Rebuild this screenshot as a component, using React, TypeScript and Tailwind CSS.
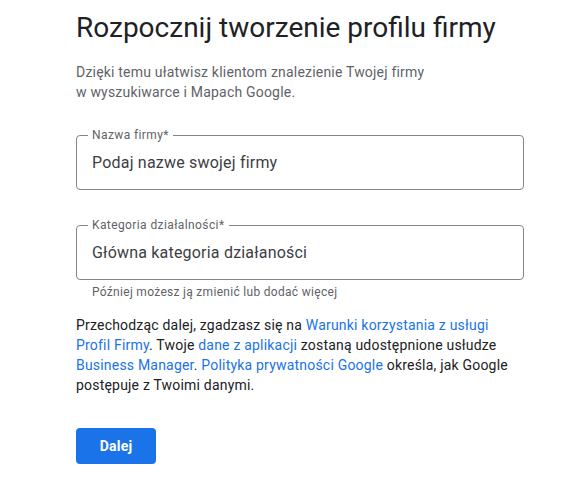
const FONT = "font-['Roboto','Liberation_Sans',sans-serif]";

function OutlinedField({ label, placeholder }: { label: string; placeholder: string }) {
  return (
    <div className="relative h-[55px] rounded-[4px] border border-[#80868b] flex items-center pl-[15px]">
      <span className="absolute left-[11px] -top-[9px] bg-white px-[4px] text-[12px] leading-[16px] tracking-[0.4px] text-[#5f6368]">
        {label}
      </span>
      <span className="text-[16px] leading-[24px] tracking-[0.2px] text-[#3c4043]">{placeholder}</span>
    </div>
  );
}

function Link({ children }: { children: React.ReactNode }) {
  return (
    <a href="#" className="text-[#1a73e8]">
      {children}
    </a>
  );
}

export default function App() {
  return (
    <div className={`${FONT} min-h-[500px] bg-white pl-[76px] pt-[10px]`}>
      <div className="w-[448px]">
        <h1 className="text-[28px] leading-[36px] font-normal text-[#202124]">
          Rozpocznij tworzenie profilu firmy
        </h1>
        <p className="mt-[16px] text-[14px] leading-[20px] tracking-[0.2px] text-[#5f6368]">
          Dzięki temu ułatwisz klientom znalezienie Twojej firmy
          <br />w wyszukiwarce i Mapach Google.
        </p>

        <div className="mt-[33px]">
          <OutlinedField label="Nazwa firmy*" placeholder="Podaj nazwe swojej firmy" />
        </div>
        <div className="mt-[35px]">
          <OutlinedField label="Kategoria działalności*" placeholder="Główna kategoria działaności" />
          <p className="mt-[4px] pl-[16px] text-[12px] leading-[16px] tracking-[0.3px] text-[#5f6368]">
            Później możesz ją zmienić lub dodać więcej
          </p>
        </div>

        <p className="mt-[15px] text-[14px] leading-[20px] tracking-[0.2px] text-[#202124]">
          Przechodząc dalej, zgadzasz się na <Link>Warunki korzystania z usługi Profil Firmy</Link>. Twoje{" "}
          <Link>dane z aplikacji</Link> zostaną udostępnione usłudze <Link>Business Manager</Link>.{" "}
          <Link>Polityka prywatności Google</Link> określa, jak Google postępuje z Twoimi danymi.
        </p>

        <button className="mt-[33px] h-[36px] w-[80px] rounded-[4px] bg-[#1a73e8] text-[14px] font-bold tracking-[0.25px] text-white">
          Dalej
        </button>
      </div>
    </div>
  );
}
